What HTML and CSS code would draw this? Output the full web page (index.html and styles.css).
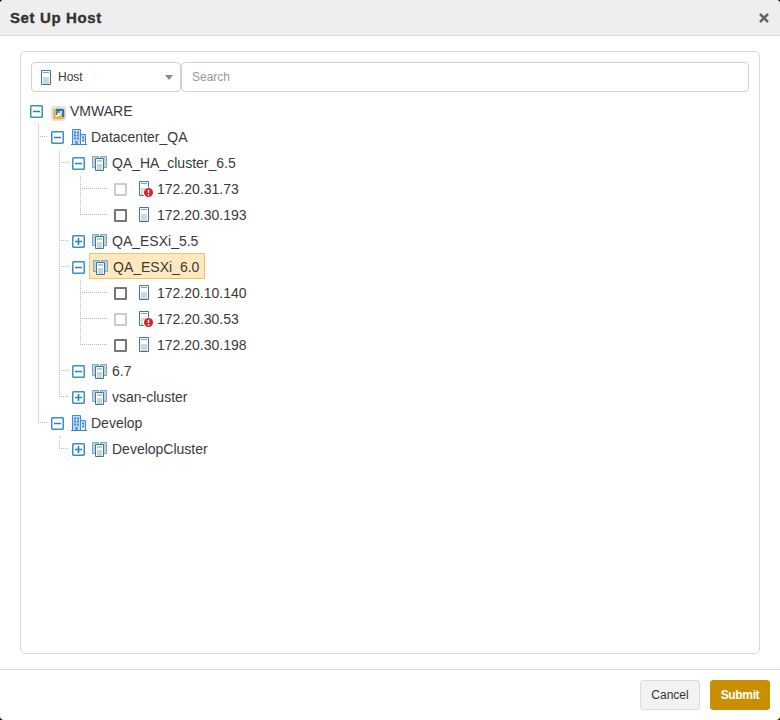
FILE: index.html
```html
<!DOCTYPE html>
<html lang="en">
<head>
<meta charset="utf-8">
<title>Set Up Host</title>
<link rel="stylesheet" href="styles.css">
</head>
<body>
<svg class="sprite" aria-hidden="true">
  <symbol id="minus" viewBox="0 0 13 13"><rect x=".75" y=".75" width="11.5" height="11.5" rx=".7" fill="#fff" stroke="#3a8fc3" stroke-width="1.5"/><path d="M3 6.5h7" stroke="#2583bd" stroke-width="1.5"/></symbol>
  <symbol id="plus" viewBox="0 0 13 13"><rect x=".75" y=".75" width="11.5" height="11.5" rx=".7" fill="#fff" stroke="#3a8fc3" stroke-width="1.5"/><path d="M3 6.5h7M6.5 3v7" stroke="#2583bd" stroke-width="1.6"/></symbol>
  <symbol id="vmware" viewBox="0 0 16 16"><rect x="0" y="1" width="15" height="15" rx="3" fill="#dce9d5"/><path d="M5 4.800h6q1.200 0 1.200 1.200v6.500" fill="none" stroke="#2d6db5" stroke-width="2.200"/><path d="M3.300 12V6q0-1.200 1.700-1.200M3.300 11v1q0 1.200 1.200 1.200h6.500q1.200 0 1.200-1.200" fill="none" stroke="#eaac43" stroke-width="2.300"/><path d="M5 6.500h5.500v5.500H5z" fill="#eef0e0"/><path d="M5.500 10V7h3.500" fill="none" stroke="#2d6db5" stroke-width="1.400"/><path d="M6.500 11.500h3.500V8" fill="none" stroke="#eaac43" stroke-width="1.200"/></symbol>
  <symbol id="datacenter" viewBox="0 0 16 16"><path d="M1.500 15V.500h8V15M9.500 5.500h5V15" fill="#c3dbf8" stroke="#3f8ae0"/><path d="M0 15.500h16" stroke="#3583dc"/><path d="M3 3.500h2m1 0h2M3 6.500h2m1 0h2M3 9.500h2m1 0h2M11 8.500h2m-2 3h2" stroke="#3f87dc" stroke-width="1.800"/><path d="M4.500 12h2v3h-2z" fill="#3f87dc"/></symbol>
  <symbol id="cluster" viewBox="0 0 16 16"><path d="M.500 1.500h6v11h-6zM8.500 1.500h6v11h-6z" fill="#bed5df" stroke="#7da9bc"/><path d="M3.500 3.500h8v12h-8z" fill="#fff" stroke="#407792"/><path d="M5 6h5" stroke="#6a97ad"/><path d="M5 9h5v6H5z" fill="#c5d6df"/></symbol>
  <symbol id="host" viewBox="0 0 18 18"><path d="M5.500 1.500h9v14h-9z" fill="#fff" stroke="#39769a"/><path d="M7 3.500h6" stroke="#7ba0b8"/><path d="M7 8h6v7H7z" fill="#c8d9e0"/></symbol>
  <symbol id="alert" viewBox="0 0 20 18"><use href="#host" width="18" height="18"/><circle cx="14" cy="12.500" r="5.300" fill="#fff"/><circle cx="14.500" cy="12.500" r="4.500" fill="#e01e26"/><path d="M14.500 9.700v3.300m0 1v1.400" stroke="#fff" stroke-width="1.500"/></symbol>
</svg>
<div class="dialog">
  <header class="header">
    <h1 class="title">Set Up Host</h1>
    <svg class="close" viewBox="0 0 10 10"><path d="M1 1l8 8m0-8l-8 8" stroke="#666" stroke-width="2.500"/></svg>
  </header>
  <main class="content">
    <section class="panel">
      <div class="filters">
        <div class="select">
          <svg class="select-icon" viewBox="5 1 10 15"><use href="#host" width="18" height="18"/></svg>
          <span class="select-text">Host</span>
          <span class="caret"></span>
        </div>
        <input class="search" type="text" placeholder="Search">
      </div>
      <ul class="tree">
        <li><div class="row"><svg class="toggle"><use href="#minus"/></svg><span class="label root"><svg class="icon"><use href="#vmware"/></svg>VMWARE</span></div>
          <ul>
            <li><div class="row"><svg class="toggle"><use href="#minus"/></svg><span class="label"><svg class="icon"><use href="#datacenter"/></svg>Datacenter_QA</span></div>
              <ul>
                <li><div class="row"><svg class="toggle"><use href="#minus"/></svg><span class="label"><svg class="icon"><use href="#cluster"/></svg>QA_HA_cluster_6.5</span></div>
                  <ul class="hosts">
                    <li><div class="row"><span class="check disabled"></span><span class="label"><svg class="icon"><use href="#alert"/></svg>172.20.31.73</span></div></li>
                    <li><div class="row"><span class="check"></span><span class="label"><svg class="icon"><use href="#host" width="18" height="18"/></svg>172.20.30.193</span></div></li>
                  </ul>
                </li>
                <li><div class="row"><svg class="toggle"><use href="#plus"/></svg><span class="label"><svg class="icon"><use href="#cluster"/></svg>QA_ESXi_5.5</span></div></li>
                <li><div class="row"><svg class="toggle"><use href="#minus"/></svg><span class="label selected"><svg class="icon"><use href="#cluster"/></svg>QA_ESXi_6.0</span></div>
                  <ul class="hosts">
                    <li><div class="row"><span class="check"></span><span class="label"><svg class="icon"><use href="#host" width="18" height="18"/></svg>172.20.10.140</span></div></li>
                    <li><div class="row"><span class="check disabled"></span><span class="label"><svg class="icon"><use href="#alert"/></svg>172.20.30.53</span></div></li>
                    <li><div class="row"><span class="check"></span><span class="label"><svg class="icon"><use href="#host" width="18" height="18"/></svg>172.20.30.198</span></div></li>
                  </ul>
                </li>
                <li><div class="row"><svg class="toggle"><use href="#minus"/></svg><span class="label"><svg class="icon"><use href="#cluster"/></svg>6.7</span></div></li>
                <li><div class="row"><svg class="toggle"><use href="#plus"/></svg><span class="label"><svg class="icon"><use href="#cluster"/></svg>vsan-cluster</span></div></li>
              </ul>
            </li>
            <li><div class="row"><svg class="toggle"><use href="#minus"/></svg><span class="label"><svg class="icon"><use href="#datacenter"/></svg>Develop</span></div>
              <ul>
                <li><div class="row"><svg class="toggle"><use href="#plus"/></svg><span class="label"><svg class="icon"><use href="#cluster"/></svg>DevelopCluster</span></div></li>
              </ul>
            </li>
          </ul>
        </li>
      </ul>
    </section>
  </main>
  <footer class="footer">
    <button class="button">Cancel</button>
    <button class="button primary">Submit</button>
  </footer>
</div>
</body>
</html>
```
FILE: styles.css
```css
* { box-sizing: border-box; }
body { margin: 0; background: #000; color: #3a3a3a; font-family: "Liberation Sans", Arial, sans-serif; font-size: 14px; }
svg { display: block; flex: none; }
.sprite { display: none; }
.dialog { display: flex; flex-direction: column; height: 720px; background: #fff; border-radius: 4px; overflow: hidden; }
.header { display: flex; align-items: center; justify-content: space-between; height: 36px; padding: 0 11px 0 10px; background: #eee; border-bottom: 1px solid #d9d9dc; }
.title { margin: 0; font-size: 15px; font-weight: 700; letter-spacing: .62px; color: #333; -webkit-text-stroke: .35px #333; }
.close { width: 10px; height: 10px; }
.content { flex: 1; display: flex; padding: 15px 20px; }
.panel { flex: 1; padding: 10px; border: 1px solid #d9d9dc; border-radius: 5px; }
.filters { display: flex; height: 30px; }
.select { display: flex; align-items: center; width: 150px; padding: 0 7px 0 9px; border: 1px solid #cdd0dc; border-radius: 4px; font-size: 12px; }
.select-icon { width: 10px; height: 15px; margin-right: 7px; }
.select-text { flex: 1; }
.caret { border: 4px solid transparent; border-top: 5px solid #888; border-bottom: 0; }
.search { flex: 1; padding: 0 10px; border: 1px solid #cdd0dc; border-radius: 4px; font: 12px "Liberation Sans", Arial, sans-serif; background: #fff; }
.search::placeholder { color: #999; }
.tree, .tree ul { margin: 0; padding: 0; list-style: none; }
.tree { margin: 6px 0 0 -1px; }
.tree ul { margin-left: 8px; }
.tree ul > li {
  padding-left: 13px;
  background:
    repeating-linear-gradient(to bottom, #bbb 0 1px, transparent 1px 2px) 0 0 / 1px 100% no-repeat,
    repeating-linear-gradient(to right, #bbb 0 1px, transparent 1px 2px) 0 12px / 10px 1px no-repeat;
}
.tree ul > li:last-child { background-size: 1px 13px, 10px 1px; }
.tree .hosts > li { padding-left: 34px; background-size: 1px 100%, 27px 1px; }
.tree .hosts > li:last-child { background-size: 1px 13px, 27px 1px; }
.row { display: flex; align-items: flex-start; height: 26px; }
.toggle { width: 13px; height: 13px; margin: 7px 4px 0 0; }
.check { width: 13px; height: 13px; margin: 7px 4px 0 0; border: 2px solid #777; border-radius: 1px; background: #fff; }
.check.disabled { border-color: #ccc; }
.label { display: flex; align-items: center; height: 26px; padding: 0 4px 0 3px; line-height: 26px; white-space: nowrap; }
.icon { width: 16px; height: 16px; margin-right: 4px; }
.root .icon { margin: 3px 3px 0 1px; }
.hosts .icon { width: 20px; height: 18px; margin-right: 3px; }
.selected { margin-top: -1px; padding-top: 2px; padding-right: 5px; border: 1px solid #f5c06d; background: #ffe8bd; }
.selected .icon { margin-top: -1px; }
.footer { display: flex; align-items: center; justify-content: flex-end; gap: 10px; height: 51px; padding: 0 10px; border-top: 1px solid #d9d9dc; }
.button { width: 60px; height: 30px; padding: 0; border: 1px solid #ddd; border-radius: 3px; background: #f2f2f2; color: #333; font: 12px "Liberation Sans", Arial, sans-serif; }
.primary { border-color: #ca8f00; background: #ca8f00; color: #fff; font-weight: 700; letter-spacing: -.35px; }
```
